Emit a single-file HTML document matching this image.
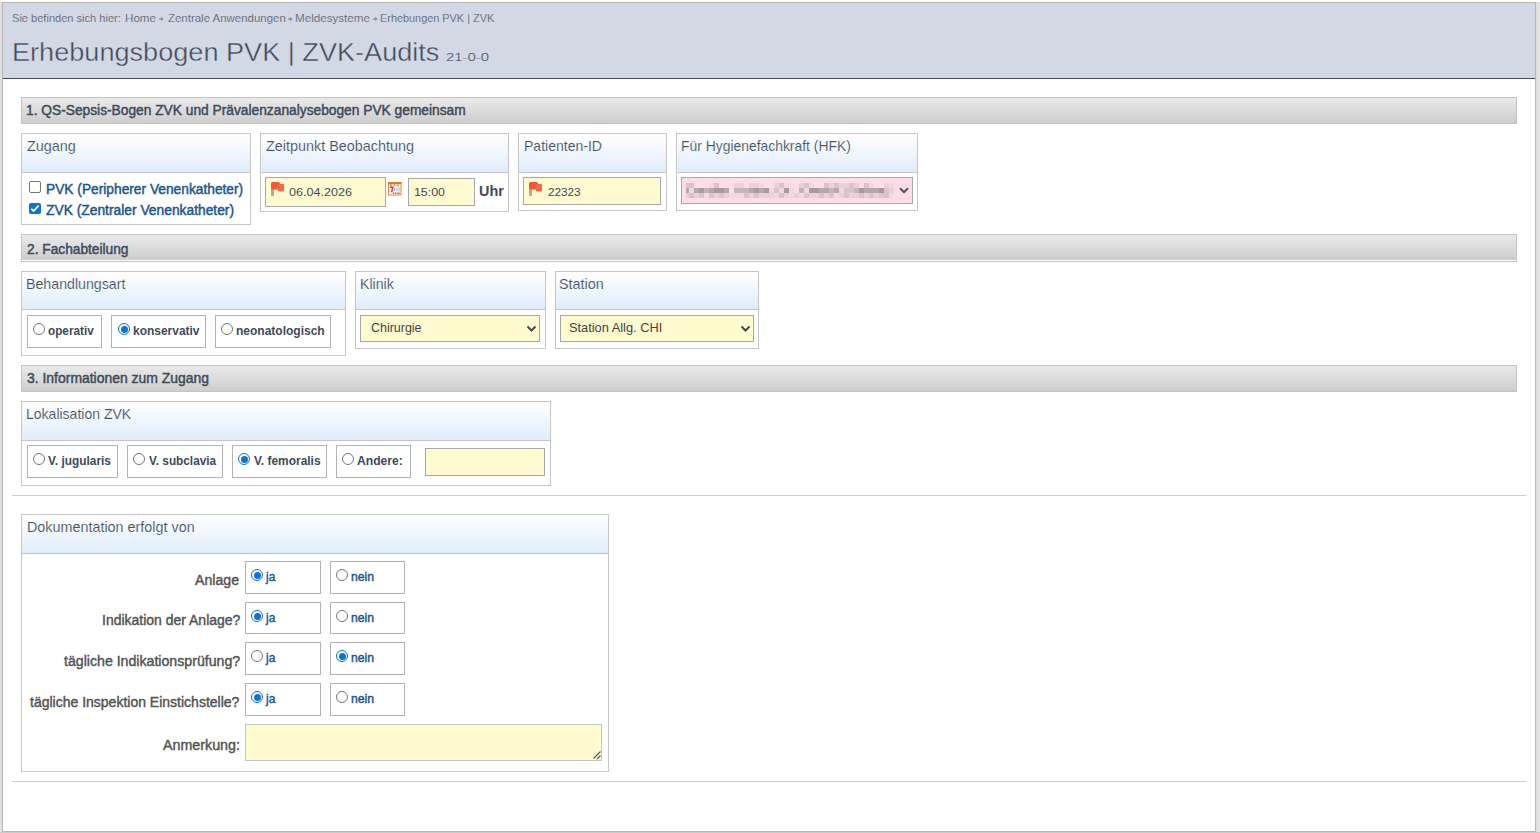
<!DOCTYPE html>
<html><head><meta charset="utf-8">
<style>
html,body{margin:0;padding:0;width:1540px;height:833px;overflow:hidden;background:#fff;font-family:"Liberation Sans",sans-serif;}
.a{position:absolute;box-sizing:border-box;}
.t{position:absolute;white-space:nowrap;line-height:normal;transform-origin:0 0;font-family:"Liberation Sans",sans-serif;}
.sec{position:absolute;box-sizing:border-box;border:1px solid #c4c4c4;background:linear-gradient(#eaeaea,#cdcdcd);}
.fs{position:absolute;box-sizing:border-box;border:1px solid #c6c6c6;background:#fff;}
.lg{position:absolute;box-sizing:border-box;left:0;top:0;right:0;border-bottom:1px solid #c6c6c6;background:linear-gradient(#fefeff 5%,#deedfc);}
.rb{position:absolute;box-sizing:border-box;border:1px solid #b3b3b3;background:#fff;}
.inp{position:absolute;box-sizing:border-box;border:1px solid #a8a8a8;background:#fffacf;}
.hr{position:absolute;height:1px;background:#cfcfcf;}
.rad{position:absolute;box-sizing:border-box;width:12px;height:12px;border-radius:50%;border:1px solid #767676;background:#fff;}
.rad.on{border:1px solid #0b72d6;}
.rad.on::after{content:"";position:absolute;left:1.5px;top:1.5px;width:7px;height:7px;border-radius:50%;background:#0b72d6;}
</style></head><body>
<!-- page frame -->
<div class="a" style="left:0;top:2px;width:2px;height:831px;background:#e0e0e0"></div>
<div class="a" style="left:1536px;top:2px;width:4px;height:831px;background:linear-gradient(to right,#dcdcdc 25%,#e2e2e2 25%)"></div>
<div class="a" style="left:0;top:832px;width:1540px;height:1px;background:#cbcbcb"></div>
<div class="a" style="left:2px;top:2px;width:1534px;height:830px;border:1px solid #b7b7b3;background:#fff"></div>
<!-- header -->
<div class="a" style="left:3px;top:3px;width:1532px;height:76px;background:#d3d9e4;border-bottom:1px solid #434f60"></div>
<!-- breadcrumb separators -->
<svg class="a" style="left:159px;top:16px" width="5" height="6"><path d="M0 2.2 H2.2 V0.5 L4.6 3 L2.2 5.5 V3.8 H0 Z" fill="#8e939c"/></svg>
<svg class="a" style="left:288px;top:16px" width="5" height="6"><path d="M0 2.2 H2.2 V0.5 L4.6 3 L2.2 5.5 V3.8 H0 Z" fill="#8e939c"/></svg>
<svg class="a" style="left:372.5px;top:16px" width="5" height="6"><path d="M0 2.2 H2.2 V0.5 L4.6 3 L2.2 5.5 V3.8 H0 Z" fill="#8e939c"/></svg>
<!-- section headers -->
<div class="sec" style="left:21px;top:97px;width:1496px;height:27px"></div>
<div class="sec" style="left:21px;top:234px;width:1496px;height:28px;background:linear-gradient(#eaeaea,#cdcdcd) 0 0/100% 25px no-repeat,#fff"></div>
<div class="sec" style="left:21px;top:365px;width:1496px;height:27px"></div>
<!-- fieldsets section 1 -->
<div class="fs" style="left:21px;top:133px;width:230px;height:92px"><div class="lg" style="height:39px"></div></div>
<div class="fs" style="left:260px;top:133px;width:249px;height:79px"><div class="lg" style="height:39px"></div></div>
<div class="fs" style="left:518px;top:133px;width:149px;height:78px"><div class="lg" style="height:39px"></div></div>
<div class="fs" style="left:676px;top:133px;width:242px;height:78px"><div class="lg" style="height:39px"></div></div>
<!-- section 2 -->
<div class="fs" style="left:21px;top:271px;width:325px;height:85px"><div class="lg" style="height:38px"></div></div>
<div class="fs" style="left:355px;top:271px;width:191px;height:78px"><div class="lg" style="height:38px"></div></div>
<div class="fs" style="left:555px;top:271px;width:204px;height:78px"><div class="lg" style="height:38px"></div></div>
<!-- section 3 -->
<div class="fs" style="left:21px;top:401px;width:530px;height:85px"><div class="lg" style="height:39px"></div></div>
<div class="hr" style="left:12px;top:495px;width:1514px"></div>
<!-- doku -->
<div class="fs" style="left:21px;top:514px;width:588px;height:258px"><div class="lg" style="height:39px"></div></div>
<div class="hr" style="left:12px;top:781px;width:1514px"></div>

<!-- checkboxes -->
<div class="a" style="left:29px;top:181px;width:12px;height:12px;border:1px solid #767676;border-radius:2px;background:#fff"></div>
<div class="a" style="left:29px;top:203px;width:12px;height:11px;border-radius:2px;background:#0b72d6"></div>
<svg class="a" style="left:29px;top:203px" width="12" height="11"><path d="M2.3 5.6 L4.6 8 L9.6 2.6" stroke="#fff" stroke-width="1.7" fill="none"/></svg>

<!-- date/time inputs -->
<div class="inp" style="left:265px;top:177px;width:121px;height:30px"></div>
<svg class="a" style="left:268px;top:179px" width="20" height="20"><rect x="3" y="9" width="3" height="8" rx="1" fill="#c9a47c"/><path d="M3 4.5 Q3 3 4.5 3 L10.5 3 Q12 3 12 4.5 L12 10.5 L4.5 10.5 Q3 10.5 3 9 Z" fill="#f2553b"/><path d="M10 5 L15 5 Q16 5 16 6 L16 11.5 Q16 12.5 15 12.5 L11 12.5 Q10 12.5 10 11.5 Z" fill="#ef6a4c"/></svg>
<svg class="a" style="left:388px;top:181px" width="14" height="15"><rect x="0.5" y="1.5" width="12.5" height="12.5" fill="#f2f7fc" stroke="#ea8a2c" stroke-width="1"/><rect x="0" y="1" width="13.5" height="2.2" fill="#e2791c"/><circle cx="3" cy="4.3" r="1" fill="#e4892e"/><circle cx="6.5" cy="4.3" r="1" fill="#e4892e"/><circle cx="10" cy="4.3" r="1" fill="#e4892e"/><path d="M2 6.3 H4.8 L3.6 11.2" stroke="#e23a3a" stroke-width="1.5" fill="none"/><rect x="5.8" y="6.5" width="1" height="3.5" fill="#7aa6da"/><rect x="8" y="6.5" width="4" height="4" fill="#c6daf0"/><rect x="5" y="11.6" width="1.3" height="1.2" fill="#d63a3a"/><rect x="7" y="11.6" width="1.3" height="1.2" fill="#d63a3a"/><rect x="8.8" y="11.6" width="3.2" height="1.2" fill="#e06a6a"/></svg>
<div class="inp" style="left:408px;top:178px;width:67px;height:28px"></div>
<div class="inp" style="left:523px;top:177px;width:138px;height:28px"></div>
<svg class="a" style="left:526px;top:179px" width="20" height="20"><rect x="3" y="9" width="3" height="8" rx="1" fill="#c9a47c"/><path d="M3 4.5 Q3 3 4.5 3 L10.5 3 Q12 3 12 4.5 L12 10.5 L4.5 10.5 Q3 10.5 3 9 Z" fill="#f2553b"/><path d="M10 5 L15 5 Q16 5 16 6 L16 11.5 Q16 12.5 15 12.5 L11 12.5 Q10 12.5 10 11.5 Z" fill="#ef6a4c"/></svg>
<!-- HFK select -->
<div class="inp" style="left:681px;top:177px;width:232px;height:27px;background:#ffdde7"></div>
<svg id="blur" class="a" style="left:681px;top:177px" width="232" height="27"><rect x="5" y="6" width="3" height="5" fill="#dcc3cb"/><rect x="8" y="6" width="5" height="5" fill="#dcc3cb"/><rect x="28" y="6" width="5" height="5" fill="#f6d7df"/><rect x="33" y="6" width="5" height="5" fill="#dcc3cb"/><rect x="53" y="6" width="5" height="5" fill="#ecd0d8"/><rect x="58" y="6" width="5" height="5" fill="#ecd0d8"/><rect x="68" y="6" width="5" height="5" fill="#ecd0d8"/><rect x="73" y="6" width="5" height="5" fill="#ecd0d8"/><rect x="78" y="6" width="5" height="5" fill="#f6d7df"/><rect x="93" y="6" width="5" height="5" fill="#ecd0d8"/><rect x="98" y="6" width="5" height="5" fill="#dcc3cb"/><rect x="103" y="6" width="5" height="5" fill="#f6d7df"/><rect x="118" y="6" width="5" height="5" fill="#ecd0d8"/><rect x="123" y="6" width="5" height="5" fill="#dcc3cb"/><rect x="128" y="6" width="5" height="5" fill="#f6d7df"/><rect x="143" y="6" width="5" height="5" fill="#dcc3cb"/><rect x="148" y="6" width="5" height="5" fill="#ecd0d8"/><rect x="153" y="6" width="5" height="5" fill="#dcc3cb"/><rect x="158" y="6" width="5" height="5" fill="#ecd0d8"/><rect x="163" y="6" width="5" height="5" fill="#ecd0d8"/><rect x="168" y="6" width="5" height="5" fill="#dcc3cb"/><rect x="173" y="6" width="5" height="5" fill="#ecd0d8"/><rect x="183" y="6" width="5" height="5" fill="#dcc3cb"/><rect x="188" y="6" width="5" height="5" fill="#f6d7df"/><rect x="203" y="6" width="5" height="5" fill="#ecd0d8"/><rect x="208" y="6" width="5" height="5" fill="#f6d7df"/><rect x="5" y="11" width="3" height="5" fill="#b9a5ac"/><rect x="8" y="11" width="5" height="5" fill="#f6d7df"/><rect x="13" y="11" width="5" height="5" fill="#b9a5ac"/><rect x="18" y="11" width="5" height="5" fill="#a99aa0"/><rect x="23" y="11" width="5" height="5" fill="#c9b3ba"/><rect x="28" y="11" width="5" height="5" fill="#b9a5ac"/><rect x="33" y="11" width="5" height="5" fill="#a99aa0"/><rect x="38" y="11" width="5" height="5" fill="#a99aa0"/><rect x="43" y="11" width="5" height="5" fill="#b9a5ac"/><rect x="53" y="11" width="5" height="5" fill="#c9b3ba"/><rect x="58" y="11" width="5" height="5" fill="#c9b3ba"/><rect x="63" y="11" width="5" height="5" fill="#c9b3ba"/><rect x="68" y="11" width="5" height="5" fill="#b9a5ac"/><rect x="73" y="11" width="5" height="5" fill="#a99aa0"/><rect x="78" y="11" width="5" height="5" fill="#b9a5ac"/><rect x="83" y="11" width="5" height="5" fill="#a99aa0"/><rect x="88" y="11" width="5" height="5" fill="#f6d7df"/><rect x="93" y="11" width="5" height="5" fill="#dcc3cb"/><rect x="98" y="11" width="5" height="5" fill="#f6d7df"/><rect x="103" y="11" width="5" height="5" fill="#a99aa0"/><rect x="108" y="11" width="5" height="5" fill="#f6d7df"/><rect x="118" y="11" width="5" height="5" fill="#c9b3ba"/><rect x="123" y="11" width="5" height="5" fill="#f6d7df"/><rect x="128" y="11" width="5" height="5" fill="#a99aa0"/><rect x="133" y="11" width="5" height="5" fill="#a99aa0"/><rect x="138" y="11" width="5" height="5" fill="#b9a5ac"/><rect x="143" y="11" width="5" height="5" fill="#b9a5ac"/><rect x="148" y="11" width="5" height="5" fill="#c9b3ba"/><rect x="153" y="11" width="5" height="5" fill="#b9a5ac"/><rect x="158" y="11" width="5" height="5" fill="#f6d7df"/><rect x="163" y="11" width="5" height="5" fill="#dcc3cb"/><rect x="168" y="11" width="5" height="5" fill="#dcc3cb"/><rect x="173" y="11" width="5" height="5" fill="#c9b3ba"/><rect x="178" y="11" width="5" height="5" fill="#a99aa0"/><rect x="183" y="11" width="5" height="5" fill="#b9a5ac"/><rect x="188" y="11" width="5" height="5" fill="#b9a5ac"/><rect x="193" y="11" width="5" height="5" fill="#b9a5ac"/><rect x="198" y="11" width="5" height="5" fill="#a99aa0"/><rect x="203" y="11" width="5" height="5" fill="#dcc3cb"/><rect x="208" y="11" width="5" height="5" fill="#ecd0d8"/><rect x="5" y="16" width="3" height="5" fill="#ecd0d8"/><rect x="8" y="16" width="5" height="5" fill="#dcc3cb"/><rect x="13" y="16" width="5" height="5" fill="#ecd0d8"/><rect x="18" y="16" width="5" height="5" fill="#dcc3cb"/><rect x="23" y="16" width="5" height="5" fill="#f6d7df"/><rect x="28" y="16" width="5" height="5" fill="#dcc3cb"/><rect x="33" y="16" width="5" height="5" fill="#ecd0d8"/><rect x="38" y="16" width="5" height="5" fill="#dcc3cb"/><rect x="43" y="16" width="5" height="5" fill="#ecd0d8"/><rect x="48" y="16" width="5" height="5" fill="#f6d7df"/><rect x="53" y="16" width="5" height="5" fill="#f6d7df"/><rect x="58" y="16" width="5" height="5" fill="#f6d7df"/><rect x="63" y="16" width="5" height="5" fill="#dcc3cb"/><rect x="68" y="16" width="5" height="5" fill="#ecd0d8"/><rect x="73" y="16" width="5" height="5" fill="#dcc3cb"/><rect x="78" y="16" width="5" height="5" fill="#ecd0d8"/><rect x="83" y="16" width="5" height="5" fill="#ecd0d8"/><rect x="88" y="16" width="5" height="5" fill="#ecd0d8"/><rect x="93" y="16" width="5" height="5" fill="#f6d7df"/><rect x="98" y="16" width="5" height="5" fill="#dcc3cb"/><rect x="103" y="16" width="5" height="5" fill="#ecd0d8"/><rect x="108" y="16" width="5" height="5" fill="#f6d7df"/><rect x="113" y="16" width="5" height="5" fill="#ecd0d8"/><rect x="118" y="16" width="5" height="5" fill="#f6d7df"/><rect x="123" y="16" width="5" height="5" fill="#dcc3cb"/><rect x="128" y="16" width="5" height="5" fill="#ecd0d8"/><rect x="133" y="16" width="5" height="5" fill="#ecd0d8"/><rect x="138" y="16" width="5" height="5" fill="#dcc3cb"/><rect x="143" y="16" width="5" height="5" fill="#ecd0d8"/><rect x="148" y="16" width="5" height="5" fill="#dcc3cb"/><rect x="153" y="16" width="5" height="5" fill="#f6d7df"/><rect x="158" y="16" width="5" height="5" fill="#ecd0d8"/><rect x="163" y="16" width="5" height="5" fill="#dcc3cb"/><rect x="168" y="16" width="5" height="5" fill="#ecd0d8"/><rect x="173" y="16" width="5" height="5" fill="#ecd0d8"/><rect x="178" y="16" width="5" height="5" fill="#dcc3cb"/><rect x="183" y="16" width="5" height="5" fill="#ecd0d8"/><rect x="188" y="16" width="5" height="5" fill="#dcc3cb"/><rect x="193" y="16" width="5" height="5" fill="#ecd0d8"/><rect x="198" y="16" width="5" height="5" fill="#dcc3cb"/><rect x="203" y="16" width="5" height="5" fill="#dcc3cb"/><rect x="208" y="16" width="5" height="5" fill="#f6d7df"/></svg>
<svg class="a" style="left:899px;top:187px" width="11" height="8"><path d="M1 1.2 L5 5.2 L9 1.2" stroke="#505050" stroke-width="2" fill="none"/></svg>
<!-- selects -->
<div class="inp" style="left:360px;top:315px;width:180px;height:27px"></div>
<svg class="a" style="left:525.5px;top:324.5px" width="12" height="8"><path d="M1.5 1.5 L5.5 5.5 L9.5 1.5" stroke="#4a4a4a" stroke-width="2" fill="none"/></svg>
<div class="inp" style="left:560px;top:315px;width:194px;height:27px"></div>
<svg class="a" style="left:739.5px;top:324.5px" width="12" height="8"><path d="M1.5 1.5 L5.5 5.5 L9.5 1.5" stroke="#4a4a4a" stroke-width="2" fill="none"/></svg>

<!-- radio boxes behandlungsart -->
<div class="rb" style="left:27px;top:315px;width:75px;height:33px"></div>
<div class="rb" style="left:111px;top:315px;width:95px;height:33px"></div>
<div class="rb" style="left:215px;top:315px;width:116px;height:33px"></div>
<div class="rad" style="left:33px;top:323px"></div>
<div class="rad on" style="left:118px;top:323px"></div>
<div class="rad" style="left:221px;top:323px"></div>
<!-- lokalisation -->
<div class="rb" style="left:27px;top:445px;width:91px;height:33px"></div>
<div class="rb" style="left:127px;top:445px;width:96px;height:33px"></div>
<div class="rb" style="left:232px;top:445px;width:95px;height:33px"></div>
<div class="rb" style="left:336px;top:445px;width:75px;height:33px"></div>
<div class="rad" style="left:33px;top:453px"></div>
<div class="rad" style="left:133px;top:453px"></div>
<div class="rad on" style="left:238px;top:453px"></div>
<div class="rad" style="left:342px;top:453px"></div>
<div class="inp" style="left:425px;top:448px;width:120px;height:28px"></div>
<!-- doku radios -->
<div class="rb" style="left:245px;top:561px;width:76px;height:33px"></div>
<div class="rb" style="left:330px;top:561px;width:75px;height:33px"></div>
<div class="rb" style="left:245px;top:602px;width:76px;height:32px"></div>
<div class="rb" style="left:330px;top:602px;width:75px;height:32px"></div>
<div class="rb" style="left:245px;top:642px;width:76px;height:33px"></div>
<div class="rb" style="left:330px;top:642px;width:75px;height:33px"></div>
<div class="rb" style="left:245px;top:683px;width:76px;height:33px"></div>
<div class="rb" style="left:330px;top:683px;width:75px;height:33px"></div>
<div class="rad on" style="left:251px;top:569px"></div>
<div class="rad" style="left:336px;top:569px"></div>
<div class="rad on" style="left:251px;top:610px"></div>
<div class="rad" style="left:336px;top:610px"></div>
<div class="rad" style="left:251px;top:650px"></div>
<div class="rad on" style="left:336px;top:650px"></div>
<div class="rad on" style="left:251px;top:691px"></div>
<div class="rad" style="left:336px;top:691px"></div>
<!-- textarea -->
<div class="inp" style="left:245px;top:724px;width:357px;height:37px;border-color:#c4c4c4"></div>
<svg class="a" style="left:591px;top:750px" width="10" height="10"><path d="M9.5 1.5 L2.5 8.5 M9.5 5.5 L6 9" stroke="#555" stroke-width="1.1"/></svg>
<span class="t" id="t0" style="left:11.50px;top:12.0px;font-size:11px;font-weight:400;color:#5a606b;transform:scaleX(1.0056);-webkit-text-stroke:0.15px #d3d9e4">Sie befinden sich hier:</span>
<span class="t" id="t1" style="left:125.00px;top:12.0px;font-size:11px;font-weight:400;color:#5a606b;transform:scaleX(1.0576);-webkit-text-stroke:0.15px #d3d9e4">Home</span>
<span class="t" id="t2" style="left:167.50px;top:12.0px;font-size:11px;font-weight:400;color:#5a606b;transform:scaleX(1.0412);-webkit-text-stroke:0.15px #d3d9e4">Zentrale Anwendungen</span>
<span class="t" id="t3" style="left:295.00px;top:12.0px;font-size:11px;font-weight:400;color:#5a606b;transform:scaleX(1.0572);-webkit-text-stroke:0.15px #d3d9e4">Meldesysteme</span>
<span class="t" id="t4" style="left:380.00px;top:12.0px;font-size:11px;font-weight:400;color:#5a606b;transform:scaleX(0.9895);-webkit-text-stroke:0.15px #d3d9e4">Erhebungen PVK | ZVK</span>
<span class="t" id="t5" style="left:12.00px;top:38.4px;font-size:25px;font-weight:400;color:#3f4b5b;transform:scaleX(1.0842);-webkit-text-stroke:0.4px #d3d9e4">Erhebungsbogen PVK | ZVK-Audits</span>
<span class="t" id="t6" style="left:446.00px;top:52.0px;font-size:10px;font-weight:400;color:#3f4b5b;transform:scaleX(1.4932);-webkit-text-stroke:0.2px #d3d9e4">21-0-0</span>
<span class="t" id="t7" style="left:25.50px;top:102.3px;font-size:14px;font-weight:400;color:#3d4a5c;transform:scaleX(0.9826);-webkit-text-stroke:0.45px #3d4a5c">1. QS-Sepsis-Bogen ZVK und Prävalenzanalysebogen PVK gemeinsam</span>
<span class="t" id="t8" style="left:27.00px;top:241.3px;font-size:14px;font-weight:400;color:#3d4a5c;transform:scaleX(0.9806);-webkit-text-stroke:0.45px #3d4a5c">2. Fachabteilung</span>
<span class="t" id="t9" style="left:26.50px;top:370.3px;font-size:14px;font-weight:400;color:#3d4a5c;transform:scaleX(0.9956);-webkit-text-stroke:0.45px #3d4a5c">3. Informationen zum Zugang</span>
<span class="t" id="t10" style="left:26.50px;top:137.9px;font-size:14.5px;font-weight:400;color:#435063;transform:scaleX(0.9917);-webkit-text-stroke:0.15px #f2f8fe">Zugang</span>
<span class="t" id="t11" style="left:265.50px;top:137.9px;font-size:14.5px;font-weight:400;color:#435063;transform:scaleX(0.9919);-webkit-text-stroke:0.15px #f2f8fe">Zeitpunkt Beobachtung</span>
<span class="t" id="t12" style="left:523.50px;top:137.9px;font-size:14.5px;font-weight:400;color:#435063;transform:scaleX(0.9677);-webkit-text-stroke:0.15px #f2f8fe">Patienten-ID</span>
<span class="t" id="t13" style="left:680.50px;top:137.9px;font-size:14.5px;font-weight:400;color:#435063;transform:scaleX(0.9578);-webkit-text-stroke:0.15px #f2f8fe">Für Hygienefachkraft (HFK)</span>
<span class="t" id="t14" style="left:26.00px;top:275.9px;font-size:14.5px;font-weight:400;color:#435063;transform:scaleX(0.9783);-webkit-text-stroke:0.15px #f2f8fe">Behandlungsart</span>
<span class="t" id="t15" style="left:360.00px;top:275.9px;font-size:14.5px;font-weight:400;color:#435063;transform:scaleX(0.9760);-webkit-text-stroke:0.15px #f2f8fe">Klinik</span>
<span class="t" id="t16" style="left:559.00px;top:275.9px;font-size:14.5px;font-weight:400;color:#435063;transform:scaleX(0.9907);-webkit-text-stroke:0.15px #f2f8fe">Station</span>
<span class="t" id="t17" style="left:25.50px;top:405.9px;font-size:14.5px;font-weight:400;color:#435063;transform:scaleX(0.9664);-webkit-text-stroke:0.15px #f2f8fe">Lokalisation ZVK</span>
<span class="t" id="t18" style="left:27.00px;top:518.9px;font-size:14.5px;font-weight:400;color:#435063;transform:scaleX(0.9904);-webkit-text-stroke:0.15px #f2f8fe">Dokumentation erfolgt von</span>
<span class="t" id="t19" style="left:45.50px;top:181.3px;font-size:14px;font-weight:400;color:#1b578c;transform:scaleX(0.9819);-webkit-text-stroke:0.45px #1b578c">PVK (Peripherer Venenkatheter)</span>
<span class="t" id="t20" style="left:46.00px;top:202.3px;font-size:14px;font-weight:400;color:#1b578c;transform:scaleX(0.9864);-webkit-text-stroke:0.45px #1b578c">ZVK (Zentraler Venenkatheter)</span>
<span class="t" id="t21" style="left:289.00px;top:186.9px;font-size:10px;font-weight:400;color:#434a55;transform:scaleX(1.2561)">06.04.2026</span>
<span class="t" id="t22" style="left:413.50px;top:186.9px;font-size:10px;font-weight:400;color:#434a55;transform:scaleX(1.2338)">15:00</span>
<span class="t" id="t23" style="left:479.00px;top:183.3px;font-size:14px;font-weight:700;color:#3d4a5c;transform:scaleX(1.0262)">Uhr</span>
<span class="t" id="t24" style="left:547.50px;top:186.9px;font-size:10px;font-weight:400;color:#434a55;transform:scaleX(1.1720)">22323</span>
<span class="t" id="t25" style="left:370.50px;top:319.7px;font-size:13px;font-weight:400;color:#444;transform:scaleX(0.9579)">Chirurgie</span>
<span class="t" id="t26" style="left:569.00px;top:319.7px;font-size:13px;font-weight:400;color:#444;transform:scaleX(0.9850)">Station Allg. CHI</span>
<span class="t" id="t27" style="left:48.00px;top:324.1px;font-size:12px;font-weight:700;color:#3d4a5c;transform:scaleX(0.9787)">operativ</span>
<span class="t" id="t28" style="left:132.50px;top:324.1px;font-size:12px;font-weight:700;color:#3d4a5c;transform:scaleX(0.9970)">konservativ</span>
<span class="t" id="t29" style="left:235.50px;top:324.1px;font-size:12px;font-weight:700;color:#3d4a5c;transform:scaleX(1.0001)">neonatologisch</span>
<span class="t" id="t30" style="left:48.00px;top:454.1px;font-size:12px;font-weight:700;color:#3d4a5c;transform:scaleX(0.9906)">V. jugularis</span>
<span class="t" id="t31" style="left:148.50px;top:454.1px;font-size:12px;font-weight:700;color:#3d4a5c;transform:scaleX(0.9825)">V. subclavia</span>
<span class="t" id="t32" style="left:254.00px;top:454.1px;font-size:12px;font-weight:700;color:#3d4a5c;transform:scaleX(0.9941)">V. femoralis</span>
<span class="t" id="t33" style="left:356.50px;top:454.1px;font-size:12px;font-weight:700;color:#3d4a5c;transform:scaleX(1.0093)">Andere:</span>
<span class="t" id="t34" style="left:195.00px;top:571.9px;font-size:14px;font-weight:400;color:#525252;transform:scaleX(1.0091);-webkit-text-stroke:0.4px #525252">Anlage</span>
<span class="t" id="t35" style="left:266.00px;top:569.2px;font-size:13px;font-weight:400;color:#1b578c;transform:scaleX(0.9208);-webkit-text-stroke:0.45px #1b578c">ja</span>
<span class="t" id="t36" style="left:351.00px;top:569.2px;font-size:13px;font-weight:400;color:#1b578c;transform:scaleX(0.9345);-webkit-text-stroke:0.45px #1b578c">nein</span>
<span class="t" id="t37" style="left:101.50px;top:611.5px;font-size:14px;font-weight:400;color:#525252;transform:scaleX(0.9986);-webkit-text-stroke:0.4px #525252">Indikation der Anlage?</span>
<span class="t" id="t38" style="left:266.00px;top:610.2px;font-size:13px;font-weight:400;color:#1b578c;transform:scaleX(0.9208);-webkit-text-stroke:0.45px #1b578c">ja</span>
<span class="t" id="t39" style="left:351.00px;top:610.2px;font-size:13px;font-weight:400;color:#1b578c;transform:scaleX(0.9345);-webkit-text-stroke:0.45px #1b578c">nein</span>
<span class="t" id="t40" style="left:63.50px;top:652.7px;font-size:14px;font-weight:400;color:#525252;transform:scaleX(1.0103);-webkit-text-stroke:0.4px #525252">tägliche Indikationsprüfung?</span>
<span class="t" id="t41" style="left:266.00px;top:650.2px;font-size:13px;font-weight:400;color:#1b578c;transform:scaleX(0.9208);-webkit-text-stroke:0.45px #1b578c">ja</span>
<span class="t" id="t42" style="left:351.00px;top:650.2px;font-size:13px;font-weight:400;color:#1b578c;transform:scaleX(0.9345);-webkit-text-stroke:0.45px #1b578c">nein</span>
<span class="t" id="t43" style="left:30.00px;top:693.5px;font-size:14px;font-weight:400;color:#525252;transform:scaleX(1.0000);-webkit-text-stroke:0.4px #525252">tägliche Inspektion Einstichstelle?</span>
<span class="t" id="t44" style="left:266.00px;top:691.2px;font-size:13px;font-weight:400;color:#1b578c;transform:scaleX(0.9208);-webkit-text-stroke:0.45px #1b578c">ja</span>
<span class="t" id="t45" style="left:351.00px;top:691.2px;font-size:13px;font-weight:400;color:#1b578c;transform:scaleX(0.9345);-webkit-text-stroke:0.45px #1b578c">nein</span>
<span class="t" id="t46" style="left:163.00px;top:737.3px;font-size:14px;font-weight:400;color:#525252;transform:scaleX(1.0188);-webkit-text-stroke:0.4px #525252">Anmerkung:</span></body></html>
